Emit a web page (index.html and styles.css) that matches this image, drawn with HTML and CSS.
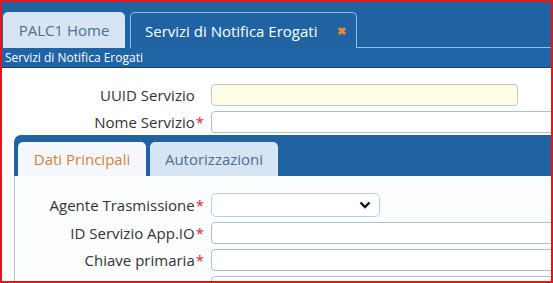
FILE: index.html
```html
<!DOCTYPE html>
<html lang="it">
  <head>
    <meta charset="UTF-8">
    <title>Servizi di Notifica Erogati</title>
    <link rel="stylesheet" href="styles.css">
  </head>
  <body>
    <div class="frame">
      <!-- barra delle schede principali -->
      <div class="topbar">
        <div class="main-tab">PALC1 Home</div>
        <div class="main-tab active">Servizi di Notifica Erogati <span class="close">&#x2716;</span></div>
        <div class="tab-fill"></div>
      </div>
      <div class="titlebar">Servizi di Notifica Erogati</div>

      <div class="form">
        <div class="row">
          <label class="lbl">UUID Servizio<span class="req hidden">*</span></label>
          <input type="text" class="field uuid">
        </div>
        <div class="row">
          <label class="lbl">Nome Servizio<span class="req">*</span></label>
          <input type="text" class="field wide">
        </div>

        <div class="panel">
          <div class="panel-head">
            <div class="sub-tab selected">Dati Principali</div>
            <div class="sub-tab">Autorizzazioni</div>
          </div>
          <div class="panel-body">
            <div class="row select-row">
              <label class="lbl">Agente Trasmissione<span class="req">*</span></label>
              <div class="select">
                <svg width="12" height="8" viewBox="0 0 12 8"><path d="M1.5 1.5 L6 6 L10.5 1.5" fill="none" stroke="#111" stroke-width="2.4"/></svg>
              </div>
            </div>
            <div class="row">
              <label class="lbl">ID Servizio App.IO<span class="req">*</span></label>
              <input type="text" class="field wide">
            </div>
            <div class="row">
              <label class="lbl">Chiave primaria<span class="req">*</span></label>
              <input type="text" class="field wide">
            </div>
            <div class="row">
              <label class="lbl">Chiave secondaria<span class="req">*</span></label>
              <input type="text" class="field wide">
            </div>
          </div>
        </div>
      </div>
    </div>
  </body>
</html>
```

FILE: styles.css
```css
/* pagina */
body {
  margin: 0;
  font-family: "Open Sans", "Liberation Sans", sans-serif;
  background: #fff;
}

.frame {
  width: 553px;
  height: 283px;
  box-sizing: border-box;
  border: 2px solid #e2161b;
  overflow: hidden;
  background: #fff;
}

/* schede principali */
.topbar {
  display: flex;
  align-items: flex-end;
  height: 46px;
  background: #1f63a3;
  padding-left: 1px;
  box-sizing: border-box;
}

.main-tab {
  height: 36px;
  width: 122px;
  flex: none;
  box-sizing: border-box;
  display: flex;
  align-items: center;
  justify-content: center;
  background: #d6e4f4;
  color: #4e6f90;
  font-size: 15px;
  white-space: nowrap;
  border-radius: 5px 5px 0 0;
  margin-right: 5px;
}

.main-tab.active {
  width: 227px;
  background: #1f63a3;
  color: #fff;
  border: 1px solid #8fc0ec;
  border-bottom: none;
  margin-right: 0;
  justify-content: flex-start;
  padding-left: 14px;
}

.close {
  color: #ee8a2c;
  font-size: 11px;
  font-weight: bold;
  margin-left: 20px;
}

.tab-fill {
  flex: 1;
  border-bottom: 1px solid #8fc0ec;
}

.titlebar {
  height: 20px;
  box-sizing: border-box;
  background: #1f64a5;
  border-bottom: 1px solid #123f6b;
  color: #fff;
  font-size: 12px;
  line-height: 19px;
  padding-left: 3px;
}

/* modulo */
.form {
  padding-top: 16px;
}

.row {
  display: flex;
  align-items: center;
  height: 22px;
  margin-bottom: 5px;
  white-space: nowrap;
}

.lbl {
  width: 202px;
  flex: none;
  text-align: right;
  font-size: 15px;
  line-height: 20px;
  color: #333;
  margin-right: 7px;
}

.req {
  color: #d6262d;
  margin-left: 1px;
}

.req.hidden {
  visibility: hidden;
}

.field {
  height: 22px;
  box-sizing: border-box;
  border: 1px solid #aabfd3;
  border-radius: 4px;
  background: #fff;
  outline: none;
  flex: none;
}

.uuid {
  width: 307px;
  background: #fefde6;
  border-color: #c3c7c6;
}

.wide {
  width: 400px;
}

/* pannello con schede interne */
.panel {
  margin-left: 12px;
  margin-top: -3px;
}

.panel-head {
  display: flex;
  align-items: flex-end;
  height: 41px;
  background: #1f63a3;
  border-radius: 7px 0 0 0;
  padding-left: 4px;
  box-sizing: border-box;
}

.sub-tab {
  width: 128px;
  height: 34px;
  display: flex;
  align-items: center;
  justify-content: center;
  font-size: 15px;
  color: #4e6f90;
  background: #d6e4f4;
  border-radius: 5px 5px 0 0;
  margin-right: 4px;
}

.sub-tab.selected {
  background: #f4f8fc;
  color: #d3803f;
}

.panel-body {
  border-left: 1px solid #a9c4dc;
  background: #fcfdff;
  padding-top: 17px;
  height: 200px;
}

.panel-body .lbl {
  width: 189px;
}

.select-row {
  height: 24px;
}

.select {
  width: 169px;
  height: 24px;
  box-sizing: border-box;
  border: 1px solid #b9cde0;
  border-radius: 5px;
  background: #fff;
  display: flex;
  align-items: center;
  justify-content: flex-end;
  padding-right: 8px;
}
```
